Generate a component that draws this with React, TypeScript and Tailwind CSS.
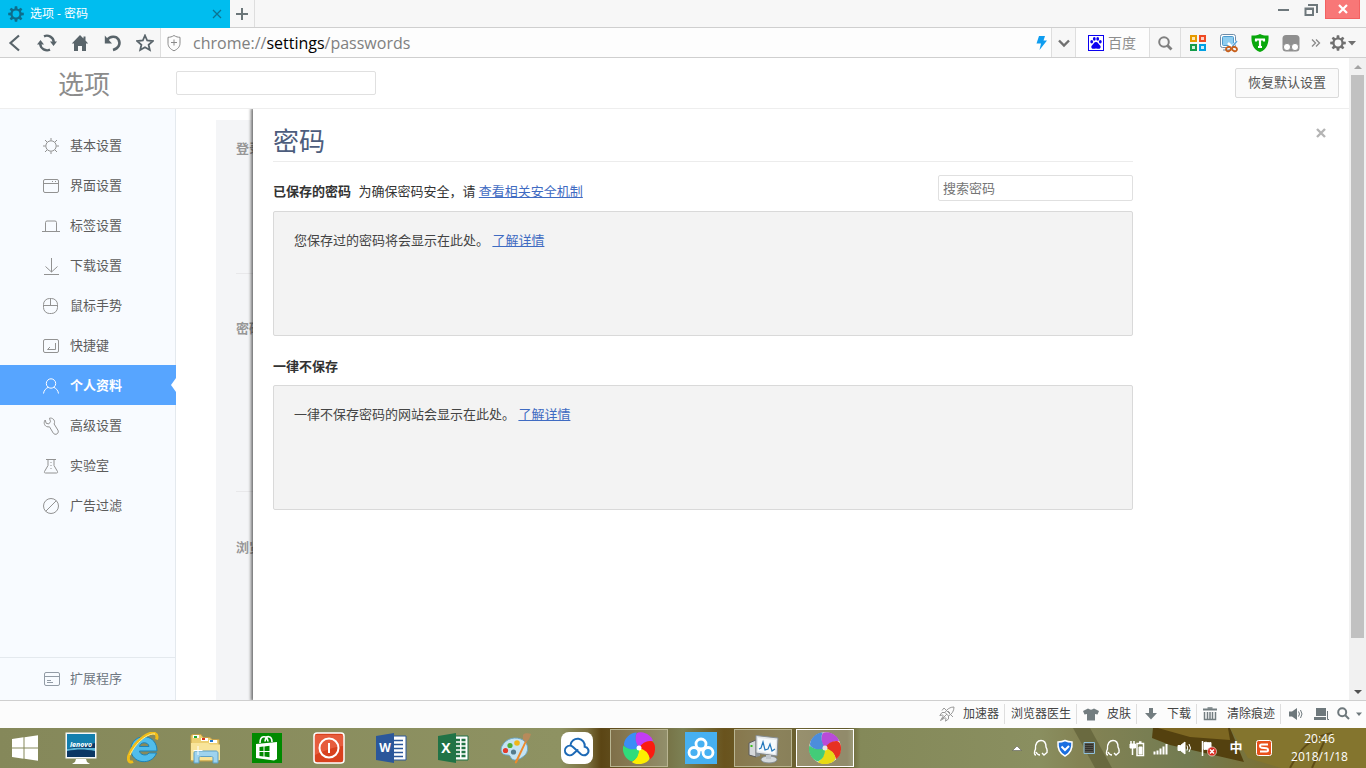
import type { ReactNode } from "react";
import clsx from "clsx";

type IconProps = {
  children: ReactNode;
  size?: number;
  className?: string;
  strokeWidth?: number;
};

// Outline icon on an 18px grid, unless another size is asked for
function Line({ children, size = 18, className, strokeWidth = 1 }: IconProps) {
  return (
    <svg
      width={size}
      height={size}
      viewBox={`0 0 ${size} ${size}`}
      fill="none"
      stroke="currentColor"
      strokeWidth={strokeWidth}
      className={clsx("shrink-0", className)}
      aria-hidden
    >
      {children}
    </svg>
  );
}

const GEAR_ANGLES = [0, 45, 90, 135, 180, 225, 270, 315];

function Gear({ size, className }: { size: number; className?: string }) {
  return (
    <svg
      width={size}
      height={size}
      viewBox="0 0 16 16"
      className={clsx("shrink-0", className)}
      aria-hidden
    >
      <circle cx="8" cy="8" r="4.5" fill="none" stroke="currentColor" strokeWidth="2.2" />
      {GEAR_ANGLES.map((a) => (
        <path key={a} d="M6.8.2h2.4l.4 3H6.4z" fill="currentColor" transform={`rotate(${a} 8 8)`} />
      ))}
    </svg>
  );
}

const NAV_ITEMS = [
  {
    label: "基本设置",
    icon: (
      <>
        <circle cx="9" cy="9" r="5.2" />
        <path d="M9 1v2.5M9 14.5V17M1 9h2.5M14.5 9H17M3 3l2.3 2.3M12.7 12.7 15 15M3 15l2.3-2.3M12.7 5.3 15 3" />
      </>
    ),
  },
  {
    label: "界面设置",
    icon: (
      <>
        <rect x="1.5" y="2.5" width="15" height="13" rx="1.5" />
        <path d="M1.5 6.5h15M10 4.5h1M13 4.5h1" />
      </>
    ),
  },
  {
    label: "标签设置",
    icon: <path d="M0 14.5h18M3.5 14.5v-9A1.5 1.5 0 0 1 5 4h8a1.5 1.5 0 0 1 1.5 1.5v9" />,
  },
  {
    label: "下载设置",
    icon: <path d="M9.5 1v14M3.5 9.5l6 5.5 6-5.5M2 17.5h15" />,
  },
  {
    label: "鼠标手势",
    icon: (
      <>
        <rect x="1.5" y="1.5" width="14" height="15" rx="6" />
        <path d="M1.5 8.5h14M8.5 1.5v7" />
      </>
    ),
  },
  {
    label: "快捷键",
    icon: (
      <>
        <rect x="1.5" y="2.5" width="15" height="13" rx="1.5" />
        <path d="M13.5 6v6.5h-8M8 10l-2.5 2.5" />
      </>
    ),
  },
  {
    label: "个人资料",
    icon: (
      <>
        <circle cx="9" cy="6.5" r="4.7" />
        <path d="M1.5 16.5c.5-3.5 2.5-5 4.8-6.3M16.5 16.5c-.5-3.5-2.5-5-4.8-6.3" />
      </>
    ),
  },
  {
    label: "高级设置",
    icon: (
      <path d="M7.500 1.200l1 3.500-1.700 2.200-2.600-.6L3.200 3C1.500 5 2 8.300 4.500 9.500c1 .5 2 .5 3 .3l3.700 6.200c.8 1.300 2.500 1.700 3.800.9s1.700-2.500.9-3.800l-3.800-6.100c.9-1.900.5-3.700-.9-4.900-1-.9-2.400-1.200-3.700-.9z" />
    ),
  },
  {
    label: "实验室",
    icon: (
      <>
        <path d="M4 2.500h10M6 2.500v6L2.500 14.500c-.4.900 0 1.500 1 1.500h11c1 0 1.400-.6 1-1.500L12 8.500v-6" />
        <path d="M9 5v7" strokeDasharray="1 2" />
      </>
    ),
  },
  {
    label: "广告过滤",
    icon: (
      <>
        <circle cx="9" cy="9" r="7.5" />
        <path d="M3.7 14.3 14.3 3.7" />
      </>
    ),
  },
];

function TabStrip() {
  return (
    <div className="flex h-7 shrink-0 border-b border-[#cfcfcf] bg-[#f7f7f7]">
      <div className="flex h-7 w-[230px] items-center bg-[#00bdef] px-2 text-white">
        <Gear size={16} className="text-[#0d6d8c]" />
        <span className="ml-1.5 flex-1 text-[12px]">选项 - 密码</span>
        <button type="button" aria-label="关闭标签" className="text-[#0d7391]">
          <Line size={10} strokeWidth={1.3}>
            <path d="M1 1l8 8M9 1 1 9" />
          </Line>
        </button>
      </div>
      <button
        type="button"
        aria-label="新建标签"
        className="flex w-[25px] items-center justify-center border-r border-[#dedede] text-[#6b7679]"
      >
        <Line size={12} strokeWidth={2}>
          <path d="M6 0v12M0 6h12" />
        </Line>
      </button>
      <div className="flex-1" />
      <div className="flex items-start pr-1.5 text-[#6e787c]">
        <button type="button" aria-label="最小化" className="flex h-5 w-[26px] items-center justify-center">
          <Line size={12} strokeWidth={2}>
            <path d="M0 6h11" />
          </Line>
        </button>
        <button type="button" aria-label="还原" className="flex h-5 w-7 items-center justify-center">
          <Line size={14} strokeWidth={2}>
            <path d="M1.5 5.5h7.5V12H1.5zM1 6h8.5" />
            <path d="M4 2h9v8" />
          </Line>
        </button>
        <button
          type="button"
          aria-label="关闭"
          className="flex h-[19px] w-[35px] items-center justify-center border border-t-0 border-[#f26161] bg-[#f87777] text-white"
        >
          <Line size={10} strokeWidth={2.2}>
            <path d="M1 1l8 8M9 1 1 9" />
          </Line>
        </button>
      </div>
    </div>
  );
}

function AddressBar() {
  return (
    <div className="flex h-[30px] shrink-0 border-b border-[#cfcfcf] bg-[#f7f7f7] text-[#59646a]">
      <div className="flex w-[161px] items-center border-r border-[#dedede]">
        <button type="button" aria-label="后退" className="flex w-[30px] justify-center">
          <Line strokeWidth={2.2}>
            <path d="M13 1.5 4.5 9l8.5 7.5" />
          </Line>
        </button>
        <button type="button" aria-label="刷新" className="flex w-[33px] justify-center">
          <Line size={20} strokeWidth={2.4}>
            <path d="M7 3.3A7 7 0 0 1 16.8 9M13 16.7A7 7 0 0 1 3.2 11" />
            <path d="M13 8.5h7L16.500 13zM0 11.5h7L3.500 7z" fill="currentColor" stroke="none" />
          </Line>
        </button>
        <button type="button" aria-label="主页" className="flex w-[33px] justify-center">
          <Line>
            <path d="M9 1 .8 9.5H3V17h4v-5h4v5h4V9.500h2.200L14.500 6.500v-4h-2v2z" fill="currentColor" stroke="none" />
          </Line>
        </button>
        <button type="button" aria-label="恢复" className="flex w-[34px] justify-center">
          <Line strokeWidth={2.6}>
            <path d="M3 6c3-4 9-4.500 11.500-.5C17 10 14.500 14.500 9 16" />
            <path d="M.8 1.500v8H8z" fill="currentColor" stroke="none" />
          </Line>
        </button>
        <button type="button" aria-label="收藏" className="flex w-[30px] justify-center">
          <Line strokeWidth={1.8}>
            <path d="M9 1.500l2.200 5 5.500.6-4.100 3.600 1.200 5.300L9 13.200 4.200 16l1.200-5.300L1.300 7.100l5.500-.6z" />
          </Line>
        </button>
      </div>
      <div className="flex flex-1 items-center bg-[#fdfdfd] pl-1 pr-[3px]">
        <Line className="text-[#8a8a8a]">
          <path d="M9 1.500c2 1.300 4 1.800 6 1.800v6c0 3.500-2.500 6-6 7.500-3.500-1.500-6-4-6-7.500v-6c2 0 4-.5 6-1.800zM9 5.500v6M6 8.500h6" />
        </Line>
        <p className="ml-2.5 flex-1 text-[16px] leading-5 text-[#808080]">
          chrome://<span className="text-black">settings</span>/passwords
        </p>
        <button type="button" aria-label="极速模式">
          <Line size={14}>
            <path d="M5 0h6L9.500 4.500H13L5.500 14 7 7.500H2.500z" fill="#0f9df0" stroke="none" />
          </Line>
        </button>
      </div>
      <button
        type="button"
        aria-label="展开"
        className="flex w-[25px] items-center justify-center border-x border-[#dedede] text-[#707070]"
      >
        <Line size={12} strokeWidth={2.4}>
          <path d="M1 3.500l5 5 5-5" />
        </Line>
      </button>
      <button type="button" className="flex w-[73px] items-center bg-[#fdfdfd] pl-3 text-[14px] text-[#8e8e8e]">
        <svg width="16" height="16" viewBox="0 0 16 16" className="mr-1" aria-hidden>
          <rect x="0.5" y="0.5" width="15" height="15" fill="#fff" stroke="#0a00f0" />
          <g fill="#0a00f0">
            <ellipse cx="3.7" cy="6.8" rx="1.4" ry="1.8" />
            <ellipse cx="6.3" cy="3.9" rx="1.4" ry="1.8" />
            <ellipse cx="9.7" cy="3.9" rx="1.4" ry="1.8" />
            <ellipse cx="12.3" cy="6.8" rx="1.4" ry="1.8" />
            <path d="M8 7c2 0 2.500 2 3.900 3.300s.8 3.500-1.200 3.500c-1 0-1.700-.4-2.700-.4s-1.700.4-2.700.4c-2 0-2.600-2.200-1.200-3.500S6 7 8 7z" />
          </g>
        </svg>
        百度
      </button>
      <button
        type="button"
        aria-label="搜索"
        className="flex w-8 items-center justify-center border-x border-[#dedede] text-[#808080]"
      >
        <Line size={16} strokeWidth={2}>
          <circle cx="7" cy="7" r="4.8" />
          <path d="M10.500 10.500l4 4" strokeWidth="2.8" />
        </Line>
      </button>
      <div className="flex items-center pl-px pr-0.5">
        <button type="button" aria-label="应用" className="flex w-[31px] justify-center">
          <Line size={16} strokeWidth={2}>
            <path d="M1 1h5v5H1z" fill="#ffe9b0" stroke="#e69a00" />
            <path d="M10 1h5v5h-5z" fill="#ffd0c4" stroke="#ef4a24" />
            <path d="M1 10h5v5H1z" fill="#d0f2dc" stroke="#129c49" />
            <path d="M10 10h5v5h-5z" fill="#cdeefa" stroke="#00a0e3" />
          </Line>
        </button>
        <button type="button" aria-label="截图" className="flex w-[31px] justify-center">
          <Line size={20}>
            <rect x="1.5" y="1.5" width="15" height="13" rx="2" fill="#fff" stroke="#6e8ca8" />
            <rect x="3.5" y="3.5" width="11" height="9" rx="1" fill="#8ecdf0" stroke="#4e9bcd" />
            <path d="M4 17h8" stroke="#6e8ca8" />
            <path d="M18 8l-5 6M9 10l4 4" stroke="#fff" strokeWidth="2.5" />
            <path d="M18 8l-5 6" stroke="#5aa6dc" strokeWidth="1.5" />
            <ellipse cx="9.5" cy="16" rx="2.5" ry="2" stroke="#c8601c" strokeWidth="1.8" transform="rotate(-25 9.5 16)" />
            <ellipse cx="15.5" cy="16" rx="2.5" ry="2" stroke="#c8601c" strokeWidth="1.8" transform="rotate(25 15.5 16)" />
          </Line>
        </button>
        <button type="button" aria-label="安全" className="flex w-[31px] justify-center">
          <Line size={18}>
            <path
              d="M9 0c3 1.500 5.500 1.800 8.500 1.500C18 9 16 15.500 9 18 2 15.500 0 9 .5 1.500 3.500 1.800 6 1.500 9 0z"
              fill="#09a80c"
              stroke="none"
            />
            <path d="M5 5v2.500M13 5v2.500M4 5.500h10M9 5.500V13M7 13h4" stroke="#fff" strokeWidth="2.2" />
          </Line>
        </button>
        <button type="button" aria-label="脚本" className="flex w-[31px] justify-center">
          <Line size={18}>
            <rect x="0.5" y="1" width="17" height="16.5" rx="3.5" fill="#8f8f8f" stroke="none" />
            <circle cx="5" cy="13" r="3.6" fill="#fff" stroke="#8f8f8f" />
            <circle cx="13" cy="13" r="3.6" fill="#fff" stroke="#8f8f8f" />
          </Line>
        </button>
        <button type="button" aria-label="更多" className="flex w-5 justify-center text-[#8a8a8a]">
          <Line size={10} strokeWidth={1.3}>
            <path d="M1 1.500 4.500 5 1 8.500M5 1.500 8.500 5 5 8.500" />
          </Line>
        </button>
        <button
          type="button"
          aria-label="设置"
          className="flex w-[38px] items-center justify-center gap-0.5 pr-1 text-[#707070]"
        >
          <Gear size={16} />
          <Line size={8}>
            <path d="M0 2h8L4 6.500z" fill="currentColor" stroke="none" />
          </Line>
        </button>
      </div>
    </div>
  );
}

function Sidebar() {
  return (
    <nav className="flex w-44 shrink-0 flex-col border-r border-[#e4e9ee] bg-[#f8fbff] pt-4 text-[#5c5c5c]">
      {NAV_ITEMS.map((item) => {
        const active = item.label === "个人资料";
        return (
          <a
            key={item.label}
            href="#"
            className={clsx(
              "relative flex h-10 items-center pl-[42px] pt-0.5",
              active && "-mr-px bg-[#57a5ff] font-bold text-white",
            )}
          >
            <Line className={active ? "text-white" : "text-[#929292]"}>{item.icon}</Line>
            <span className="ml-2.5">{item.label}</span>
            {active && (
              <svg width="5" height="14" viewBox="0 0 5 14" className="absolute right-0 top-[13px]" aria-hidden>
                <path d="M5 0v14L0 7z" fill="#fff" />
              </svg>
            )}
          </a>
        );
      })}
      <a
        href="#"
        className="mt-auto flex h-[43px] items-center border-t border-[#e4e9ee] pl-[42px] text-[#6d7681]"
      >
        <Line className="text-[#929ba5]">
          <rect x="2.5" y="2.5" width="15" height="13" rx="1.5" />
          <path d="M2.500 6.500h15M5 10.500h4M5 12.500h6" />
        </Line>
        <span className="ml-2.5">扩展程序</span>
      </a>
    </nav>
  );
}

function EmptyList({ text }: { text: string }) {
  return (
    <div className="h-[125px] rounded-xs border border-[#d9d9d9] bg-[#f3f3f3] px-5 py-[18px] leading-5 text-[#444]">
      {text}{" "}
      <a href="#" className="text-[#3f6bc2] underline">
        了解详情
      </a>
    </div>
  );
}

function PasswordDialog() {
  return (
    <section
      role="dialog"
      aria-labelledby="passwords-title"
      className="absolute inset-y-0 left-[77px] right-0 flex bg-white pl-5 shadow-[-1px_0_3px_1px_rgba(0,0,0,0.55)]"
    >
      <div className="w-full max-w-[860px]">
        <h2
          id="passwords-title"
          className="border-b border-[#ececec] pb-0.5 pt-3.5 text-[26px] leading-9 text-[#4d5d7d]"
        >
          密码
        </h2>
        <div className="flex h-[49px] items-end justify-between pb-2.5">
          <p className="leading-5 text-[#333]">
            <b className="mr-1">已保存的密码</b> 为确保密码安全，请{" "}
            <a href="#" className="text-[#3f6bc2] underline">
              查看相关安全机制
            </a>
          </p>
          <input
            type="search"
            aria-label="搜索密码"
            placeholder="搜索密码"
            className="h-[26px] w-[195px] rounded-xs border border-[#e0e0e0] px-1 placeholder:text-[#757575]"
          />
        </div>
        <EmptyList text="您保存过的密码将会显示在此处。" />
        <h3 className="h-[49px] pt-5 font-bold leading-5 text-[#333]">一律不保存</h3>
        <EmptyList text="一律不保存密码的网站会显示在此处。" />
      </div>
      <button type="button" aria-label="关闭" className="ml-auto mr-[23px] mt-[19px] self-start text-[#b4b4b4]">
        <Line size={10} strokeWidth={2.4}>
          <path d="M1 1l8 8M9 1 1 9" />
        </Line>
      </button>
    </section>
  );
}

function SettingsPage() {
  return (
    <div className="flex min-w-0 flex-1 flex-col bg-white">
      <header className="flex h-[51px] shrink-0 items-center border-b border-[#eee] pr-2.5">
        <h1 className="w-44 pl-[58px] pt-0.5 text-[26px] leading-8 text-[#8c8c8c]">选项</h1>
        <input
          type="search"
          aria-label="搜索设置"
          className="h-6 w-[200px] rounded-xs border border-[#e0e0e0] px-1"
        />
        <button
          type="button"
          className="ml-auto h-[30px] rounded-xs border border-[#dadada] bg-[#fafafa] px-3 text-[#555]"
        >
          恢复默认设置
        </button>
      </header>
      <div className="flex min-h-0 flex-1">
        <Sidebar />
        <main className="relative flex-1 overflow-hidden pl-10 pt-[11px]">
          <div className="h-full bg-[#f4f5f7] pl-5 font-bold leading-5 text-[#979797]">
            <h2 className="h-[154px] border-b border-[#e8e8ea] pt-[18px]">登录</h2>
            <h2 className="h-[218px] border-b border-[#e8e8ea] pt-11">密码</h2>
            <h2 className="pt-[45px]">浏览器</h2>
          </div>
          <PasswordDialog />
        </main>
      </div>
    </div>
  );
}

function Scrollbar() {
  return (
    <div className="flex w-[17px] shrink-0 flex-col bg-[#f1f1f1]" aria-hidden>
      <div className="flex h-[17px] items-center justify-center">
        <Line size={8}>
          <path d="M0 6h8L4 2z" fill="#a3a3a3" stroke="none" />
        </Line>
      </div>
      <div className="mx-0.5 flex-[563] bg-[#c1c1c1]" />
      <div className="flex-[45]" />
      <div className="flex h-[17px] items-center justify-center">
        <Line size={8}>
          <path d="M0 2h8L4 6z" fill="#505050" stroke="none" />
        </Line>
      </div>
    </div>
  );
}

function StatusBar() {
  const item = "flex h-5 items-center justify-between whitespace-nowrap border-r border-[#dedede] pr-[5px]";
  return (
    <footer className="flex h-7 shrink-0 items-center justify-end border-t border-[#cfcfcf] bg-[#fcfcfc] pb-0.5 text-[12px] text-[#444]">
      <button type="button" className={clsx(item, "w-[66px]")}>
        <Line size={16} className="text-[#999]">
          <path d="M15 1c-4 0-7 2-9 5.500L9.500 10C13 8 15 5 15 1zM6 6.500H3L.8 9.500 4 9M9.500 10v3l-3 2.200L7 12M4.500 9.500l-3 5 5-3M9 5l2 2M3 13l5-5" />
          <path d="M5 2l9 9M3 4.500l2-2.500" />
        </Line>
        加速器
      </button>
      <button type="button" className={clsx(item, "w-[72px] pl-1.5")}>
        浏览器医生
      </button>
      <button type="button" className={clsx(item, "w-[60px] pl-1.5")}>
        <Line size={16}>
          <path d="M5 2.500c2 1.500 4 1.500 6 0L16 5l-1.500 3.500L12 8v6.500H4V8l-2.500.5L0 5z" fill="#737d80" stroke="none" />
        </Line>
        皮肤
      </button>
      <button type="button" className={clsx(item, "w-[60px] pl-2")}>
        <Line size={12}>
          <path d="M4 0h4v5h4l-6 6.500L0 5h4z" fill="#737d80" stroke="none" />
        </Line>
        下载
      </button>
      <button type="button" className={clsx(item, "w-[84px] pl-1.5")}>
        <Line size={14} className="text-[#737d80]">
          <path d="M0 2.500h14" strokeWidth="2" />
          <path d="M4.500 1h5M1.500 5v7.500h11V5M4.500 5v7M7 5v7M9.500 5v7" strokeWidth="1.5" />
        </Line>
        清除痕迹
      </button>
      <div className="flex w-[85px] items-center pl-2 text-[#6e787c]">
        <button type="button" aria-label="声音" className="w-[25px]">
          <Line size={14}>
            <path d="M0 4.500h3L8 1v12L3 9.500H0z" fill="currentColor" stroke="none" />
            <path d="M9.500 4.500q2 2.500 0 5M11.500 3q3 4 0 8" />
          </Line>
        </button>
        <button type="button" aria-label="窗口" className="w-[23px]">
          <Line size={15}>
            <path d="M2 2h10v8H2zM0 11h12v3H0z" fill="currentColor" stroke="none" />
            <path d="M13.500 5v8.500H15" />
          </Line>
        </button>
        <button type="button" aria-label="缩放" className="flex items-center gap-1.5">
          <Line size={13} strokeWidth={2}>
            <circle cx="5.2" cy="5.2" r="4" />
            <path d="M8 8l4 4" />
          </Line>
          <Line size={6}>
            <path d="M0 1.500h6L3 5z" fill="currentColor" stroke="none" />
          </Line>
        </button>
      </div>
    </footer>
  );
}

const PETALS = ["#c33cf5", "#fb1b10", "#fdee00", "#2fdc7b", "#3b8df7"];

function Pinwheel({ faded }: { faded?: boolean }) {
  return (
    <svg width="32" height="32" viewBox="0 0 32 32" opacity={faded ? 0.8 : 1} aria-hidden>
      {faded && <circle cx="16" cy="16" r="15.8" fill="#fff" />}
      {PETALS.map((color, i) => (
        <path
          key={color}
          d="M16 16Q10 9 13.500 1.500 15 0 18 .2C24 .8 29 4.500 30 9Q22.500 8 16 16z"
          fill={color}
          transform={`rotate(${i * 72} 16 16)`}
        />
      ))}
      <circle cx="16" cy="16" r="2.5" fill="#fff" />
    </svg>
  );
}

function Art({ children }: { children: ReactNode }) {
  return (
    <svg width="32" height="32" viewBox="0 0 32 32" fill="none" aria-hidden>
      {children}
    </svg>
  );
}

const TASKS: { name: string; frame?: "open" | "front"; art: ReactNode }[] = [
  {
    name: "Lenovo",
    art: (
      <Art>
        <rect x="0.5" y="0.5" width="31" height="26" fill="#f5f7f8" />
        <rect x="2" y="2" width="28" height="23" fill="#147fae" />
        <path d="M2 17c10-3 18-3 28-6v14H2z" fill="#0b3764" />
        <path d="M2 17c10-2 18-1 28-1v3c-10-2-18-2-28 0z" fill="#5cb7d9" />
        <text x="16" y="15" textAnchor="middle" fontSize="7" fontWeight="700" fontStyle="italic" fill="#fff">
          lenovo
        </text>
        <path d="M11 27h10l1 3 3 2H7l3-2z" fill="#fff" />
      </Art>
    ),
  },
  {
    name: "Internet Explorer",
    art: (
      <Art>
        <path
          d="M30 19H12.500c.4 4 7 5.500 9.500 2h7.500C25 34 4 32 4 17.500 4 1 30-.5 30 19zM12.500 14.500H22c-.5-5-9-5-9.500 0z"
          fill="#50bdec"
          stroke="#1c82b8"
        />
        <path d="M6 29.500c-4 2-6-2-3.500-7.500C8 9 22-1 28 1.500c2 1 2.500 3 1.500 6" stroke="#f1bd18" strokeWidth="3" />
        <path d="M3 23C9 10 21 1 28 2" stroke="#fff09a" />
      </Art>
    ),
  },
  {
    name: "文件资源管理器",
    art: (
      <Art>
        <path d="M2 4c0-1 1-1.500 2-1.500h8l2 3h7l2 2h7V29H2z" fill="#eccf72" stroke="#c39f48" />
        <path d="M4 3h6v3H4z" fill="#fff" />
        <path d="M5 4h3v2H5z" fill="#22a835" />
        <path d="M12 6h7v3h-7z" fill="#fff" />
        <path d="M13 6h3v2h-3z" fill="#d63620" />
        <path d="M20 8h8v3h-8z" fill="#fff" />
        <path d="M21 8h3v2h-3z" fill="#2378cd" />
        <path d="M2 11h17l2 1.500h10V28H2z" fill="#f8e49a" />
        <path
          d="M5 31V21c0-1 1-2 2-2h20c1 0 2 1 2 2v10h-5v-5c0-1-.5-1.500-1.500-1.500h-11c-1 0-1.500.5-1.500 1.500v5z"
          fill="#9ed3ee"
          stroke="#5c9fc4"
        />
        <path d="M9 14v9M4.500 18.500h9" stroke="#fff" />
      </Art>
    ),
  },
  {
    name: "应用商店",
    art: (
      <Art>
        <path d="M1 1h30v30H1z" fill="#008a00" />
        <path d="M5 12l21-2v17l-3 1.500L5 26z" fill="#fff" />
        <path d="M9 11C9 3 16 3 17 9.500M14 9.500c1-7 7-6 7 .5" stroke="#fff" strokeWidth="1.6" />
        <path d="M8.500 15l4-.5V19h-4zM13.500 14.400l5-.6V19h-5zM8.500 20h4v4.500l-4-.5zM13.500 20h5v5.200l-5-.6z" fill="#008a00" />
      </Art>
    ),
  },
  {
    name: "关机",
    art: (
      <Art>
        <rect x="1" y="1" width="30" height="30" rx="3" fill="#d8411e" stroke="#fff" strokeWidth="1.5" />
        <path d="M2 3h28v11C20 15 10 19 2 23z" fill="#ec684a" opacity="0.7" />
        <circle cx="16" cy="16" r="9.5" stroke="#fff" strokeWidth="2" />
        <path d="M16 11v10" stroke="#fff" strokeWidth="2" />
      </Art>
    ),
  },
  {
    name: "Word",
    art: (
      <Art>
        <path d="M17 4h14v24H17z" fill="#fff" stroke="#2b579a" />
        <path d="M18 8.500h10M18 12.500h10M18 16.500h10M18 20.500h10M18 24.500h10" stroke="#2b579a" strokeWidth="1.5" />
        <path d="M1 4l18-3v30L1 28z" fill="#2b579a" />
        <text x="10" y="20" textAnchor="middle" fontSize="12" fontWeight="700" fill="#fff">
          W
        </text>
      </Art>
    ),
  },
  {
    name: "Excel",
    art: (
      <Art>
        <path d="M17 4h14v24H17z" fill="#fff" stroke="#217346" />
        <path
          d="M19 8h10M19 12h10M19 16h10M19 20h10M19 24h10"
          stroke="#217346"
          strokeWidth="2.5"
          strokeDasharray="4 1.5"
        />
        <path d="M1 4l18-3v30L1 28z" fill="#217346" />
        <text x="9" y="21" textAnchor="middle" fontSize="14" fontWeight="700" fill="#fff">
          X
        </text>
      </Art>
    ),
  },
  {
    name: "画图",
    art: (
      <Art>
        <path
          d="M3 14C7 6 17 4 24 8c6 4 6 12 1 16-6 5-11 5-13 2-1-2-1-3-4-3-6 0-7-5-5-9z"
          fill="#c5e3f3"
          stroke="#6da6c5"
        />
        <circle cx="6.5" cy="18.5" r="2.6" fill="#e23c2c" />
        <circle cx="11" cy="13.5" r="2.6" fill="#4fae3a" />
        <circle cx="18" cy="11" r="2.8" fill="#f0b619" />
        <circle cx="14.5" cy="20" r="2.6" fill="#557b8d" />
        <path d="M26.500 8l1.500 1-10 21.500c-1 1.500-2.500 1-2-.8z" fill="#ee8a2c" />
        <path d="M24 3c3-3 6-1 8-1-1 4-3 7-5 8l-3-2z" fill="#b78a5b" />
      </Art>
    ),
  },
  {
    name: "网盘",
    art: (
      <Art>
        <rect width="32" height="32" rx="8" fill="#fff" />
        <path
          d="M16.500 18l-4.700 4.300a4.800 4.800 0 1 1 .2-7.300l8 7.200c4 3 8.700-1 7.200-4.800-.6-1.500-2-2.500-3.500-2.700A7 7 0 0 0 9.500 13"
          stroke="#1c69b6"
          strokeWidth="2"
          strokeLinecap="round"
        />
      </Art>
    ),
  },
  { name: "浏览器", frame: "open", art: <Pinwheel /> },
  {
    name: "百度网盘",
    art: (
      <Art>
        <path d="M0 0h32v32H0z" fill="#46b0f2" />
        <g stroke="#fff" strokeWidth="2.8">
          <circle cx="16" cy="12" r="5" />
          <circle cx="9" cy="20.5" r="5" />
          <circle cx="23" cy="20.5" r="5" />
        </g>
        <path d="M13 16.500h6L16 20z" fill="#fff" />
      </Art>
    ),
  },
  {
    name: "任务管理器",
    frame: "open",
    art: (
      <Art>
        <path d="M2 11l7-3v17l-7-2z" fill="#d5d8da" stroke="#5c5c5c" />
        <path d="M9 8h4v16l-4 1z" fill="#8d9498" />
        <path d="M3.500 14h2" stroke="#37c01c" strokeWidth="2" />
        <path d="M9 3.500L31 6l-1 18-21-3z" fill="#e6e9eb" stroke="#868e94" />
        <path d="M11 6l18 2-1 14-17-3z" fill="#f7fbfd" />
        <path d="M12 17l2-1 2-6 2 8 3-1 2-5 2 7 3-2" stroke="#2378bc" strokeWidth="1.2" />
        <ellipse cx="22" cy="27.5" rx="8" ry="3.5" fill="#d5dadd" stroke="#868e94" />
        <path d="M19 23h5v4h-5z" fill="#c0c6ca" />
      </Art>
    ),
  },
  { name: "浏览器 设置", frame: "front", art: <Pinwheel faded /> },
];

const PENGUIN = (
  <path
    d="M4 16c-2 0-2-3-.5-6C3 4 6 1.500 9 1.500S14 4 14 8c1 2 1.500 4 .8 5M4 13c1 2 2 3 4 3M10 14l2 2 3.500-3"
    stroke="#fff"
    strokeWidth="1.4"
  />
);

const TRAY: { name: string; icon: ReactNode }[] = [
  {
    name: "显示隐藏的图标",
    icon: <path d="M4.500 11.500h9L9 7z" fill="#fff" stroke="#444" strokeWidth="0.5" />,
  },
  { name: "QQ", icon: PENGUIN },
  {
    name: "电脑管家",
    icon: (
      <>
        <path
          d="M9 1.500c2.500 1.200 4.500 1.500 7 1.500.5 6-2 11.500-7 14C4 14.500 1.500 9 2 3c2.500 0 4.500-.3 7-1.500z"
          fill="#1b6fe0"
          stroke="#fff"
          strokeWidth="1.5"
        />
        <path d="M5.500 7.500L9 11l4-4" stroke="#fff" strokeWidth="2" />
      </>
    ),
  },
  {
    name: "键盘",
    icon: (
      <>
        <path d="M4 3.500h10.500v11H4z" fill="#54534a" stroke="#8fc0da" />
        <path d="M5.500 5.500h8M5.500 7.500h8M5.500 9.500h8M5.500 11.500h8" stroke="#111" strokeDasharray="1 1" />
      </>
    ),
  },
  { name: "QQ 2", icon: PENGUIN },
  {
    name: "电池",
    icon: (
      <>
        <path d="M9 4.500h6.500v12H9zM11 3h2.500" stroke="#fff" strokeWidth="1.5" />
        <path d="M11 8h3v7h-3z" fill="#fff" />
        <path d="M3 2v4M6 2v4M4.500 8v8" stroke="#fff" strokeWidth="1.5" />
        <path d="M2 5h5.500v4H2z" fill="#fff" />
      </>
    ),
  },
  {
    name: "网络",
    icon: (
      <path d="M2.500 12.500v3M5.500 11.500v4M8.500 9.500v6M11.500 7.500v8M14.500 5v10.500" stroke="#fff" strokeWidth="2" />
    ),
  },
  {
    name: "音量",
    icon: (
      <>
        <path d="M2 6.500h2.500L9 3v12l-4.500-3.500H2z" fill="#fff" />
        <path d="M11 6.500q1.500 2.500 0 5M13 5q3 4 0 8" stroke="#fff" />
      </>
    ),
  },
  {
    name: "操作中心",
    icon: (
      <>
        <path d="M2.500 2v15" stroke="#fff" strokeWidth="1.5" />
        <path d="M4 3.500c3-1 4 1 7 0v7c-3 1-4-1-7 0z" fill="#fff" />
        <circle cx="12" cy="12.5" r="4.5" fill="#d82a1f" stroke="#fff" strokeWidth="0.6" />
        <path d="M10 10.500l4 4M14 10.500l-4 4" stroke="#fff" strokeWidth="1.5" />
      </>
    ),
  },
];

function Wallpaper() {
  return (
    <svg
      viewBox="0 0 1366 40"
      preserveAspectRatio="none"
      className="absolute inset-0 h-full w-full"
      aria-hidden
    >
      <defs>
        <linearGradient id="wall">
          <stop offset="0" stopColor="#85885a" />
          <stop offset="0.41" stopColor="#8e9262" />
          <stop offset="0.43" stopColor="#7c7140" />
          <stop offset="0.44" stopColor="#5b4514" />
          <stop offset="0.47" stopColor="#6e6031" />
          <stop offset="0.5" stopColor="#7c8054" />
          <stop offset="0.53" stopColor="#69531d" />
          <stop offset="0.57" stopColor="#6e6332" />
          <stop offset="0.62" stopColor="#62592b" />
          <stop offset="0.63" stopColor="#848959" />
          <stop offset="0.76" stopColor="#8a8f60" />
          <stop offset="0.79" stopColor="#848354" />
          <stop offset="0.87" stopColor="#727b51" />
          <stop offset="0.93" stopColor="#7b7035" />
          <stop offset="1" stopColor="#807331" />
        </linearGradient>
      </defs>
      <path d="M0 0h1366v40H0z" fill="url(#wall)" />
      <path d="M1073 0h17l22 40h-17z" fill="#5f6038" opacity="0.7" />
      <path d="M1153 0h77l14 34-74-17-18-7z" fill="#54410f" />
      <path d="M1158 0h70l2 12-40-3z" fill="#7d6722" />
      <path d="M1230 0h136v40h-85l-33-10z" fill="#84752e" />
      <path d="M1290 40c8-15 18-31 42-35M1312 40l12-26" stroke="#5f4c16" strokeWidth="2" fill="none" />
    </svg>
  );
}

function Taskbar() {
  return (
    <div className="relative flex h-10 shrink-0 overflow-hidden bg-[#85885a]">
      <Wallpaper />
      <div className="relative flex flex-1">
        <button type="button" aria-label="开始" className="flex w-[50px] items-center justify-center">
          <svg width="28" height="28" viewBox="0 0 28 28" aria-hidden>
            <path
              d="M1 5l11.500-1.700v10.200H1zM13.500 3.200L27 1.200v12.300H13.500zM1 14.500h11.500v10.200L1 23zM13.500 14.500H27v12.300l-13.500-2z"
              fill="#fff"
            />
          </svg>
        </button>
        {TASKS.map((task) => (
          <button
            key={task.name}
            type="button"
            aria-label={task.name}
            className={clsx(
              "mx-0.5 my-px flex w-[58px] items-center justify-center border",
              !task.frame && "border-transparent",
              task.frame === "open" && "border-[#b9b592] bg-white/20",
              task.frame === "front" && "border-white bg-white/30",
            )}
          >
            {task.art}
          </button>
        ))}
      </div>
      <div className="relative flex items-center pr-3 text-white">
        {TRAY.map((entry) => (
          <button key={entry.name} type="button" aria-label={entry.name} className="flex w-6 justify-center">
            <Line>{entry.icon}</Line>
          </button>
        ))}
        <button type="button" className="w-[30px] text-[13px] font-bold">
          中
        </button>
        <button type="button" aria-label="搜狗输入法" className="flex w-[26px] justify-center">
          <Line size={16}>
            <rect x="0.5" y="0.5" width="15" height="15" rx="2" fill="#e9511b" stroke="#fff" />
            <path
              d="M12 4.500H5.500q-1.500 0-1.500 1.500t1.500 1.700l5 .6q1.500.2 1.500 1.700t-1.500 1.500H4"
              stroke="#fff"
              strokeWidth="2"
            />
          </Line>
        </button>
        <button type="button" className="ml-2 w-[69px] text-center text-[12px] leading-[18px]">
          <span className="block">20:46</span>
          <span className="block">2018/1/18</span>
        </button>
      </div>
    </div>
  );
}

export default function App() {
  return (
    <div className="flex h-screen flex-col overflow-hidden bg-white font-['Open_Sans','Noto_Sans_CJK_SC',sans-serif] text-[13px]">
      <TabStrip />
      <AddressBar />
      <div className="flex min-h-0 flex-1">
        <SettingsPage />
        <Scrollbar />
      </div>
      <StatusBar />
      <Taskbar />
    </div>
  );
}
